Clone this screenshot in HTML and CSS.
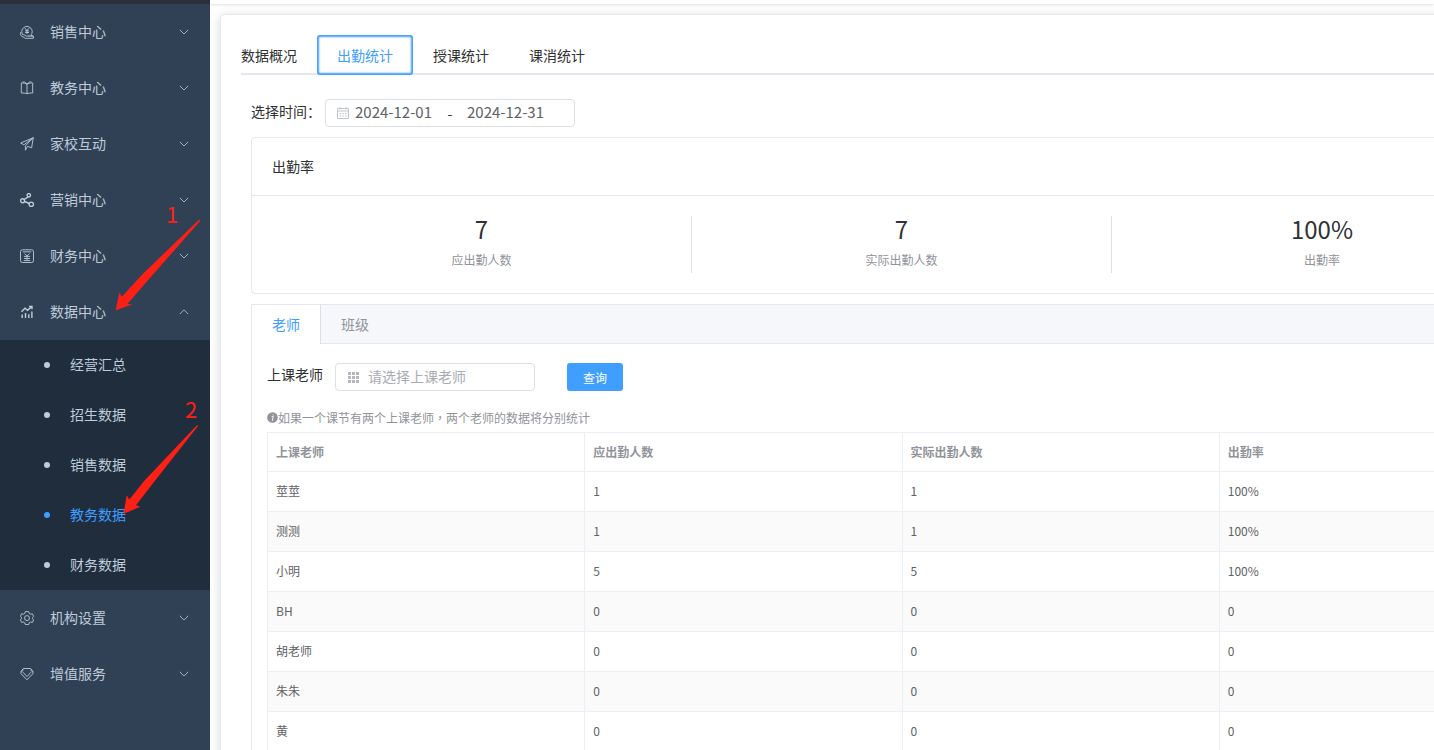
FILE: index.html
```
<!DOCTYPE html>
<html lang="zh-CN">
<head>
<meta charset="utf-8">
<title>教务数据</title>
<link rel="stylesheet" href="styles.css">
</head>
<body>
<div class="app">
  <nav class="sidebar" aria-label="主菜单">
    <button class="menu-item" type="button">
      <svg class="menu-icon" viewBox="0 0 14 14"><path d="M3.2 10.2A5.2 5.2 0 1 1 10.8 10.2"/><path d="M5 3.2 7 5.6 9 3.2M7 5.6V9M5 5.9h4M5 7.5h4"/><path d="M.6 7.2v2.3c0 .9.5 1.5 1.4 1.9l3.4 1.9h8v-2.1H8.2M3.4 9.4l2.5 1.5c.9.5 2.7.2 3.6-.5"/><path d="M11 10.4l2.4.8"/></svg>
      <span class="menu-text">销售中心</span>
      <svg class="chevron" viewBox="0 0 12 12"><path d="M1.8 3.8 6 8l4.200-4.200"/></svg>
    </button>
    <button class="menu-item" type="button">
      <svg class="menu-icon" viewBox="0 0 14 14"><path d="M7 3.200C6 2.200 3.900 1.900 1.300 2v10c2.400-.1 4.500.1 5.700.8 1.200-.7 3.300-.9 5.700-.8V2C10.100 1.900 8 2.200 7 3.200zM7 3.200v9.600M2.500 1h2l2.500 2.200L9.500 1h2"/></svg>
      <span class="menu-text">教务中心</span>
      <svg class="chevron" viewBox="0 0 12 12"><path d="M1.8 3.8 6 8l4.200-4.200"/></svg>
    </button>
    <button class="menu-item" type="button">
      <svg class="menu-icon" viewBox="0 0 14 14"><path d="M13.300.700.700 6l3.200 1.800L13.300.700 11.600 10.800 7.600 9.300M13.300.700 5.400 8.900v4.300l2.200-3.900"/></svg>
      <span class="menu-text">家校互动</span>
      <svg class="chevron" viewBox="0 0 12 12"><path d="M1.8 3.8 6 8l4.200-4.200"/></svg>
    </button>
    <button class="menu-item" type="button">
      <svg class="menu-icon bold" viewBox="0 0 14 14"><circle cx="2.600" cy="7.800" r="2"/><circle cx="8.800" cy="2.300" r="1.700"/><circle cx="11.300" cy="11.300" r="2.200"/><path d="M4.100 6.500 8.100 3.800M4.500 8.500l5 2"/></svg>
      <span class="menu-text">营销中心</span>
      <svg class="chevron" viewBox="0 0 12 12"><path d="M1.8 3.8 6 8l4.200-4.200"/></svg>
    </button>
    <button class="menu-item" type="button">
      <svg class="menu-icon" viewBox="0 0 14 14"><rect x=".5" y=".8" width="13" height="12.700" rx="2"/><path d="M2.800 2.800h8.400M4.500 4.500 7 7l2.500-2.500M7 7v4.500M4 7.400h6M4 9.500h6M3.800 11.600h6.400"/></svg>
      <span class="menu-text">财务中心</span>
      <svg class="chevron" viewBox="0 0 12 12"><path d="M1.8 3.8 6 8l4.200-4.200"/></svg>
    </button>
    <button class="menu-item" type="button" aria-expanded="true">
      <svg class="menu-icon bold" viewBox="0 0 14 14"><path d="M1.500 6.800 5 3.300l2.500 2L11.700 1.600M9 1.400h3v2.800M2.200 9.500v3.500M5.500 8v5M8.800 9.200V13M11.900 6.600V13"/></svg>
      <span class="menu-text">数据中心</span>
      <svg class="chevron" viewBox="0 0 12 12"><path d="M1.800 8 6 3.800 10.200 8"/></svg>
    </button>
    <ul class="submenu">
      <li><a class="sub-item" href="#">经营汇总</a></li>
      <li><a class="sub-item" href="#">招生数据</a></li>
      <li><a class="sub-item" href="#">销售数据</a></li>
      <li><a class="sub-item active" href="#" aria-current="page">教务数据</a></li>
      <li><a class="sub-item" href="#">财务数据</a></li>
    </ul>
    <button class="menu-item" type="button">
      <svg class="menu-icon" viewBox="0 0 14 14"><path d="M5.300.600h3.400l.5 1.800 1.300.8 1.800-.5 1.300 2.600-1.100 1.200v1.200l1.100 1.200-1.300 2.600-1.800-.5-1.300.8-.5 1.700H5.300l-.5-1.700-1.300-.8-1.800.5L.4 8.900l1.100-1.200V6.500L.4 5.300l1.300-2.600 1.800.5 1.300-.8z"/><circle cx="7" cy="7.100" r="2.500"/></svg>
      <span class="menu-text">机构设置</span>
      <svg class="chevron" viewBox="0 0 12 12"><path d="M1.8 3.8 6 8l4.200-4.200"/></svg>
    </button>
    <button class="menu-item" type="button">
      <svg class="menu-icon" viewBox="0 0 14 14"><path d="M3.300 1.500h7.400l2.300 3v2.100L7 12.800 1 6.600V4.500z"/><path d="M3 5.200l4 4.300 4-4.300M1.200 5l2.500-2.100M12.800 5l-2.500-2.100"/></svg>
      <span class="menu-text">增值服务</span>
      <svg class="chevron" viewBox="0 0 12 12"><path d="M1.8 3.8 6 8l4.200-4.200"/></svg>
    </button>
  </nav>

  <main class="main">
    <div class="topbar"></div>
    <section class="panel">
      <div class="tabs" role="tablist">
        <button class="tab" type="button" role="tab">数据概况</button>
        <button class="tab active" type="button" role="tab" aria-selected="true">出勤统计</button>
        <button class="tab" type="button" role="tab">授课统计</button>
        <button class="tab" type="button" role="tab">课消统计</button>
      </div>
      <div class="content">
        <div class="date-row">
          <label class="date-label" for="start">选择时间<span class="mark">：</span></label>
          <div class="field date-field">
            <svg class="calendar" viewBox="0 0 14 14"><path d="M1.500 2.500h11v10h-11zM1.500 5h11M4 1v2.500M10 1v2.500M3.500 7.500h1.500M6.300 7.500h1.500M9 7.500h1.500M3.500 10h1.500M6.300 10h1.500M9 10h1.500"/></svg>
            <input class="date-input" id="start" type="text" value="2024-12-01">
            <span class="dash">-</span>
            <input class="date-input" type="text" value="2024-12-31" aria-label="结束日期">
          </div>
        </div>

        <section class="card">
          <h2 class="card-title">出勤率</h2>
          <div class="stats">
            <div class="stat"><div class="stat-value">7</div><div class="stat-name">应出勤人数</div></div>
            <div class="stat"><div class="stat-value">7</div><div class="stat-name">实际出勤人数</div></div>
            <div class="stat"><div class="stat-value">100%</div><div class="stat-name">出勤率</div></div>
          </div>
        </section>

        <section class="tab-card">
          <div class="card-tabs" role="tablist">
            <button class="card-tab active" type="button" role="tab" aria-selected="true">老师</button>
            <button class="card-tab" type="button" role="tab">班级</button>
          </div>
          <div class="tab-body">
            <form class="search">
              <label class="search-label" for="teacher">上课老师</label>
              <div class="field teacher-field">
                <svg class="grid-icon" viewBox="0 0 11 11"><path d="M0 0h3v3H0zM4 0h3v3H4zM8 0h3v3H8zM0 4h3v3H0zM4 4h3v3H4zM8 4h3v3H8zM0 8h3v3H0zM4 8h3v3H4zM8 8h3v3H8z"/></svg>
                <input class="teacher-input" id="teacher" type="text" placeholder="请选择上课老师">
              </div>
              <button class="query" type="button">查询</button>
            </form>
            <p class="tip"><svg class="info" viewBox="0 0 12 12"><circle cx="6" cy="6" r="5.800"/><path d="M5 5h1.800L5.800 9h1M6.800 2.500v1.200"/></svg>如果一个课节有两个上课老师<span class="mark">，</span>两个老师的数据将分别统计</p>
            <table class="table">
              <thead><tr><th>上课老师</th><th>应出勤人数</th><th>实际出勤人数</th><th>出勤率</th></tr></thead>
              <tbody>
                <tr><td>莖莖</td><td>1</td><td>1</td><td>100%</td></tr>
                <tr><td>测测</td><td>1</td><td>1</td><td>100%</td></tr>
                <tr><td>小明</td><td>5</td><td>5</td><td>100%</td></tr>
                <tr><td>BH</td><td>0</td><td>0</td><td>0</td></tr>
                <tr><td>胡老师</td><td>0</td><td>0</td><td>0</td></tr>
                <tr><td>朱朱</td><td>0</td><td>0</td><td>0</td></tr>
                <tr><td>黄</td><td>0</td><td>0</td><td>0</td></tr>
              </tbody>
            </table>
          </div>
        </section>
      </div>
    </section>
  </main>

  <svg class="notes" width="210" height="750" viewBox="0 0 210 750">
    <path d="M115.700 310.300 119.300 292.700 122 296.700 141.700 275 199 219.700 200.300 220.700 151.700 276 127.300 304 132.300 304.500z"/>
    <path d="M123.700 513.700 126.700 495.300 129.300 499.500 145 480 197.200 425 198.200 425.700 155.500 480 136 505.300 140.300 506.700z"/>
    <text x="166" y="223">1</text>
    <text x="185" y="418">2</text>
  </svg>
</div>
</body>
</html>
```
FILE: styles.css
```
* {
  box-sizing: border-box;
}

body {
  margin: 0;
  font-family: "Noto Sans CJK SC", "Noto Sans", sans-serif;
  font-size: 14px;
  color: #303133;
  background: #fff;
}

button,
input {
  font: inherit;
  color: inherit;
  border: 0;
  padding: 0;
  background: none;
}

.app {
  position: relative;
  display: flex;
  height: 100vh;
  overflow: hidden;
}

/* Sidebar */
.sidebar {
  flex: 0 0 210px;
  background: #304156;
  border-top: 4px solid #2b2f3a;
  color: #bfcbd9;
}

.menu-item {
  display: flex;
  align-items: center;
  width: 100%;
  height: 56px;
  padding: 0 20px;
  text-align: left;
}

.menu-icon {
  width: 14px;
  height: 14px;
  margin-right: 16px;
  fill: none;
  stroke: #bfcbd9;
  stroke-width: 0.9;
}

.menu-icon.bold {
  stroke-width: 1.4;
}

.menu-text {
  flex: 1;
  padding-bottom: 2px;
}

.chevron {
  width: 12px;
  height: 12px;
  fill: none;
  stroke: #a5b0be;
  stroke-width: 1;
}

.submenu {
  margin: 0;
  padding: 0;
  list-style: none;
  background: #1f2d3d;
}

.sub-item {
  display: flex;
  align-items: center;
  gap: 20px;
  height: 50px;
  padding: 0 0 2px 44px;
  color: #bfcbd9;
  text-decoration: none;
}

.sub-item::before {
  content: "";
  width: 6px;
  height: 6px;
  margin-top: 2px;
  border-radius: 50%;
  background: currentColor;
}

.sub-item.active {
  color: #409eff;
}

/* Main area */
.main {
  flex: 1;
  min-width: 0;
  overflow: hidden;
}

.topbar {
  height: 4px;
  box-shadow: 0 1px 3px rgba(0, 0, 0, 0.12);
}

.panel {
  min-height: 100vh;
  margin: 10px -150px 0 10px;
  padding: 20px;
  border: 1px solid #e4e7ed;
  border-radius: 4px;
  background: #fff;
  box-shadow: 0 2px 12px rgba(0, 0, 0, 0.15);
}

.tabs {
  display: flex;
  height: 40px;
  box-shadow: inset 0 -2px #e4e7ed;
}

.tab {
  height: 40px;
  padding: 0 20px;
}

.tab:first-child {
  padding-left: 0;
}

.tab.active {
  border-radius: 3px;
  color: #409eff;
  box-shadow: inset 0 0 2px 2px #409eff;
}

.content {
  padding: 24px 10px 0;
}

/* Centred full-width punctuation */
.mark {
  font-family: "Noto Sans CJK TC", sans-serif;
}

.field {
  display: flex;
  align-items: center;
  height: 28px;
  border: 1px solid #dcdfe6;
  border-radius: 4px;
}

.date-row {
  display: flex;
  gap: 4px;
  margin-bottom: 10px;
}

.date-label {
  width: 70px;
  line-height: 24px;
}

.date-field {
  width: 250px;
  padding-left: 10px;
}

.calendar {
  width: 14px;
  height: 14px;
  margin-right: 3px;
  fill: none;
  stroke: #c0c4cc;
}

.date-input {
  width: 82px;
  padding: 0 2px 2px;
  font-size: 15px;
  line-height: 24px;
  color: #606266;
}

.dash {
  width: 30px;
  text-align: center;
}

.card {
  margin-bottom: 10px;
  border: 1px solid #e4e7ed;
  border-radius: 4px;
}

.card-title {
  margin: 0;
  padding: 0 20px;
  border-bottom: 1px solid #e4e7ed;
  font-size: 14px;
  font-weight: 400;
  line-height: 57px;
}

.stats {
  display: grid;
  grid-template-columns: repeat(3, 1fr);
  padding: 20px;
}

.stat {
  text-align: center;
  border-right: 1px solid #dcdfe6;
}

.stat:last-child {
  border-right: 0;
}

.stat-value {
  font-size: 24px;
  line-height: 26px;
}

.stat-name {
  padding-top: 5px;
  font-size: 12px;
  line-height: 26px;
  color: #909399;
}

/* Breakdown */
.tab-card {
  min-height: 100vh;
  border: 1px solid #e4e7ed;
}

.card-tabs {
  display: flex;
  height: 39px;
  background: #f5f7fa;
  box-shadow: inset 0 -1px #e4e7ed;
}

.card-tab {
  padding: 0 20px 2px;
  color: #909399;
}

.card-tab.active {
  border-right: 1px solid #dcdfe6;
  background: #fff;
  color: #409eff;
}

.tab-body {
  padding: 19px 15px;
}

.search {
  display: flex;
}

.search-label {
  margin-right: 12px;
  line-height: 22px;
}

.teacher-field {
  width: 200px;
  margin-right: 32px;
  padding-left: 12px;
}

.grid-icon {
  width: 11px;
  height: 11px;
  margin-right: 9px;
  fill: #b4b7bd;
}

.teacher-input {
  flex: 1;
  min-width: 0;
  padding-bottom: 2px;
  line-height: 24px;
}

.teacher-input::placeholder {
  color: #a8abb2;
}

.query {
  width: 56px;
  height: 28px;
  border-radius: 3px;
  background: #409eff;
  color: #fff;
  font-size: 12px;
}

.tip {
  display: flex;
  align-items: center;
  margin: 18px 0 5px;
  font-size: 12px;
  line-height: 18px;
  color: #909399;
}

.info {
  width: 11px;
  height: 11px;
  margin-bottom: 2px;
  fill: #909399;
}

.info path {
  fill: none;
  stroke: #fff;
}

.table {
  width: 100%;
  table-layout: fixed;
  border-spacing: 0;
  border: 0 solid #ebeef5;
  border-width: 1px 0 0 1px;
  font-size: 12px;
  color: #606266;
}

.table th,
.table td {
  height: 40px;
  padding: 0 8px 2px;
  border: 0 solid #ebeef5;
  border-width: 0 1px 1px 0;
  text-align: left;
}

.table th {
  height: 39px;
  color: #909399;
}

.table tbody tr:nth-child(even) {
  background: #fafafa;
}

/* Step markers over the menu */
.notes {
  position: absolute;
  top: 0;
  left: 0;
  pointer-events: none;
  fill: #ff2015;
  font-size: 22px;
}
```
